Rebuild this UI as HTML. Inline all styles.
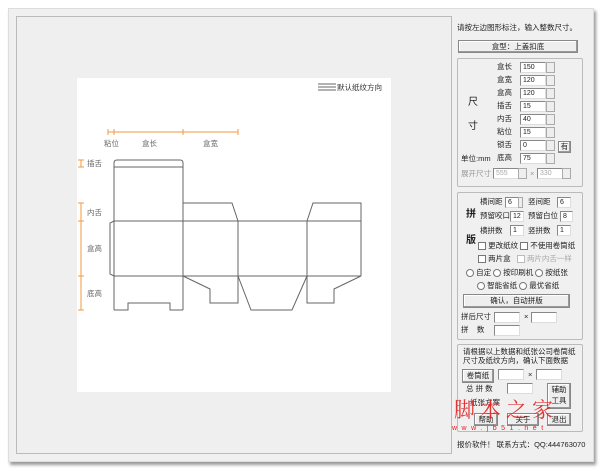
<!DOCTYPE html><html><head><meta charset="utf-8"><style>
body{margin:0;width:600px;height:471px;background:#fff;position:relative;overflow:hidden;font-family:"Liberation Sans","Noto Sans CJK SC",sans-serif;font-size:7.5px;color:#222}
.a{position:absolute;white-space:nowrap}
.win{left:8px;top:8px;width:584px;height:452px;background:#f0f0f0;border:1px solid #ddd;box-shadow:2px 3px 3px #999}
.lp{left:16px;top:16px;width:434px;height:436px;border:1px solid #bbb;background:#efefef}
.cv{left:77px;top:78px;width:314px;height:314px;background:#fff}
.g{border:1px solid #bbb;border-radius:2px}
.in{position:absolute;background:#fff;border:1px solid #888;border-right-color:#ddd;border-bottom-color:#ddd;height:9px;font-size:7px;line-height:9px;padding-left:2px;box-sizing:content-box}
.sp{position:absolute;width:7px;height:9px;border:1px solid #aaa;background:#eee}
.btn{position:absolute;border:1px solid #888;background:#eee;text-align:center;box-shadow:inset -1px -1px #999, inset 1px 1px #fff;white-space:nowrap}
.cb{display:inline-block;width:6px;height:6px;border:1px solid #777;background:#fff;vertical-align:middle}
.rd{display:inline-block;width:6px;height:6px;border:1px solid #777;border-radius:50%;background:#fff;vertical-align:middle}
.l{position:absolute;white-space:nowrap;line-height:11px}
</style></head><body>
<div class="a win"></div>
<div class="a lp"></div>
<div class="a cv"></div>
<svg class="a" style="left:0;top:0" width="450" height="471">
<g stroke="#666" fill="none" stroke-width="1">
<path d="M114 310V163Q114 160 117 160H180Q183 160 183 163V310"/><path d="M114 167H183"/>
<path d="M114 221H361M114 276H361"/>
<path d="M114 221L110 223V274L114 276"/>
<path d="M183 221V276M238 221V276M307 221V276M361 221V276"/>
<path d="M183 221V203H232L238 221"/><path d="M307 221L313 203H361V221"/>
<path d="M114 310H128V303H170V310H183"/>
<path d="M183 276L210 289V303H238V276"/>
<path d="M238 276L251 310H292L307 276"/>
<path d="M307 276V303H334V289L361 276"/>
</g>
<g stroke="#f39a3c" fill="none">
<path d="M108 132H238M108 129V135M114 129V135M183 129V135M238 129V135"/>
<path d="M78 160H84M81 160V167M78 167H84"/>
<path d="M81 203V310M78 203H84M78 221H84M78 276H84M78 310H84"/>
</g>
<g stroke="#666"><path d="M318 84H336M318 87H336M318 90H336"/></g>
<g font-size="7.5" fill="#666" font-family="Liberation Sans,Noto Sans CJK SC,sans-serif">
<text x="337" y="90" fill="#333">默认纸纹方向</text>
<text x="104" y="146">粘位</text><text x="142" y="146">盒长</text><text x="203" y="146">盒宽</text>
<text x="87" y="166">插舌</text><text x="87" y="215">内舌</text><text x="87" y="251">盒高</text><text x="87" y="296">底高</text>
</g></svg>
<div class="a" style="left:457px;top:22px">请按左边图形标注，输入整数尺寸。</div>
<div class="btn" style="left:458px;top:40px;width:118px;height:11px;line-height:11px">盒型：上盖扣底</div>
<div class="a g" style="left:457px;top:58px;width:124px;height:127px"></div>
<div class="a" style="left:468px;top:93px;font-size:10px">尺</div>
<div class="a" style="left:468px;top:117px;font-size:10px">寸</div>
<div class="l" style="left:461px;top:153px">单位:mm</div>
<div class="l" style="left:497px;top:61px">盒长</div><div class="in" style="left:520px;top:62px;width:22px">150</div><div class="sp" style="left:546px;top:62px"></div>
<div class="l" style="left:497px;top:74px">盒宽</div><div class="in" style="left:520px;top:75px;width:22px">120</div><div class="sp" style="left:546px;top:75px"></div>
<div class="l" style="left:497px;top:87px">盒高</div><div class="in" style="left:520px;top:88px;width:22px">120</div><div class="sp" style="left:546px;top:88px"></div>
<div class="l" style="left:497px;top:100px">插舌</div><div class="in" style="left:520px;top:101px;width:22px">15</div><div class="sp" style="left:546px;top:101px"></div>
<div class="l" style="left:497px;top:113px">内舌</div><div class="in" style="left:520px;top:114px;width:22px">40</div><div class="sp" style="left:546px;top:114px"></div>
<div class="l" style="left:497px;top:126px">粘位</div><div class="in" style="left:520px;top:127px;width:22px">15</div><div class="sp" style="left:546px;top:127px"></div>
<div class="l" style="left:497px;top:139px">锁舌</div><div class="in" style="left:520px;top:140px;width:22px">0</div><div class="sp" style="left:546px;top:140px"></div>
<div class="l" style="left:497px;top:152px">底高</div><div class="in" style="left:520px;top:153px;width:22px">75</div><div class="sp" style="left:546px;top:153px"></div>
<div class="btn" style="left:558px;top:141px;width:11px;height:10px;line-height:10px">有</div>
<div class="l" style="left:461px;top:168px;color:#999">展开尺寸</div>
<div class="in" style="left:493px;top:168px;width:22px;color:#aaa">555</div><div class="sp" style="left:518px;top:168px"></div>
<div class="l" style="left:530px;top:168px;color:#999">×</div>
<div class="in" style="left:537px;top:168px;width:22px;color:#aaa">330</div><div class="sp" style="left:562px;top:168px"></div>
<div class="a g" style="left:457px;top:192px;width:124px;height:146px"></div>
<div class="a" style="left:466px;top:205px;font-size:10px;font-weight:bold">拼</div>
<div class="a" style="left:466px;top:231px;font-size:10px;font-weight:bold">版</div>
<div class="l" style="left:480px;top:196px">横间距</div><div class="in" style="left:505px;top:197px;width:10px">6</div><div class="sp" style="left:518px;top:197px;width:3px"></div>
<div class="l" style="left:528px;top:196px">竖间距</div><div class="in" style="left:557px;top:197px;width:10px">6</div>
<div class="l" style="left:480px;top:210px">预留咬口</div><div class="in" style="left:510px;top:211px;width:10px">12</div>
<div class="l" style="left:528px;top:210px">预留白位</div><div class="in" style="left:560px;top:211px;width:9px">8</div>
<div class="l" style="left:480px;top:225px">横拼数</div><div class="in" style="left:510px;top:225px;width:10px">1</div>
<div class="l" style="left:528px;top:225px">竖拼数</div><div class="in" style="left:557px;top:225px;width:10px">1</div>
<div class="l" style="left:478px;top:240px"><span class="cb"></span> 更改纸纹 <span class="cb"></span> 不使用卷筒纸</div>
<div class="l" style="left:478px;top:253px"><span class="cb"></span> 两片盒 &nbsp;&nbsp;<span class="cb" style="border-color:#bbb"></span> <span style="color:#aaa">两片内舌一样</span></div>
<div class="l" style="left:466px;top:267px"><span class="rd"></span> 自定 <span class="rd"></span> 按印刷机 <span class="rd"></span> 按纸张</div>
<div class="l" style="left:477px;top:280px"><span class="rd"></span> 智能省纸 <span class="rd"></span> 最优省纸</div>
<div class="btn" style="left:463px;top:294px;width:105px;height:12px;line-height:12px">确认，自动拼版</div>
<div class="l" style="left:461px;top:311px">拼后尺寸</div><div class="in" style="left:494px;top:312px;width:22px"></div><div class="l" style="left:524px;top:311px">×</div><div class="in" style="left:531px;top:312px;width:22px"></div>
<div class="l" style="left:461px;top:324px">拼&nbsp;&nbsp;&nbsp;&nbsp;数</div><div class="in" style="left:494px;top:325px;width:22px"></div>
<div class="a g" style="left:457px;top:344px;width:124px;height:86px"></div>
<div class="a" style="left:463px;top:347px;line-height:9px">请根据以上数据和纸张公司卷筒纸<br>尺寸及纸纹方向，确认下面数据</div>
<div class="btn" style="left:462px;top:369px;width:30px;height:12px;line-height:12px">卷筒纸</div>
<div class="in" style="left:498px;top:369px;width:22px"></div><div class="l" style="left:528px;top:369px">×</div><div class="in" style="left:536px;top:369px;width:22px"></div>
<div class="l" style="left:466px;top:383px">总&nbsp;拼&nbsp;数</div><div class="in" style="left:507px;top:383px;width:22px"></div>
<div class="btn" style="left:547px;top:383px;width:22px;height:24px;line-height:11px">辅助<br>工具</div>
<div class="l" style="left:470px;top:397px">纸张方案</div>
<div class="btn" style="left:474px;top:413px;width:22px;height:11px;line-height:11px">帮助</div>
<div class="btn" style="left:507px;top:413px;width:30px;height:11px;line-height:11px">关于</div>
<div class="btn" style="left:547px;top:413px;width:22px;height:11px;line-height:11px">退出</div>
<div class="a" style="left:454px;top:394px;color:#e02020;font-size:21px;font-family:'Noto Serif CJK SC',serif;letter-spacing:5px;opacity:.9">脚本之家</div>
<div class="a" style="left:452px;top:425px;color:#e02020;font-size:7px;letter-spacing:4.5px">www.jb51.net</div>
<div class="a" style="left:457px;top:439px">报价软件！ 联系方式：QQ:444763070</div>
</body></html>
